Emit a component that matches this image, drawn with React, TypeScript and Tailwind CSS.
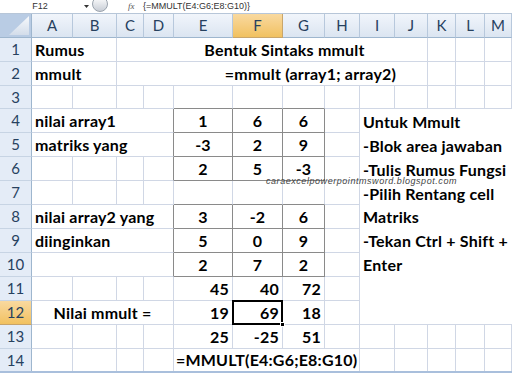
import React from "react";

const font = "font-['Lato','Noto_Sans',sans-serif]";
const cell = "border-r border-b border-[#d0d7e5] flex items-end pb-[2px] whitespace-nowrap font-bold text-[16px] leading-[18px] tracking-[0.2px] text-black";
const mx = "border-r-[#8a8a8a] border-b-[#8a8a8a] justify-center";
const rh = "bg-[#e4ecf7] border-r border-b border-r-[#9eb6ce] border-b-[#c7d4e4] flex items-center justify-center text-[15px] text-[#27415f] font-normal";
const rhSel = "bg-gradient-to-b from-[#f9d99f] to-[#f1c15f] border-r border-b border-r-[#9eb6ce] border-b-[#c7a36a] flex items-center justify-center text-[15px] text-[#27415f] font-normal";
const ch = "bg-gradient-to-b from-[#f1f5fb] to-[#dbe5f1] border-r border-b border-r-[#b7c8dc] border-b-[#9eb6ce] flex items-center justify-center text-[15px] text-[#27415f]";
const chSel = "bg-gradient-to-b from-[#f9d99f] to-[#f1c15f] border-r border-b border-r-[#c9a66b] border-b-[#c9a66b] flex items-center justify-center text-[15px] text-[#27415f]";

export default function App() {
  const cols = ["A", "B", "C", "D", "E", "F", "G", "H", "I", "J", "K", "L", "M"];
  return (
    <div className={`relative w-[512px] h-[373px] overflow-hidden bg-white ${font}`}>
      {/* formula bar */}
      <div className="h-[14px] flex items-start bg-white border-b border-[#b7c6d8] overflow-hidden">
        <div className="w-[80px] h-[13px] flex items-center justify-center text-[9px] leading-[9px] text-[#333] font-['Liberation_Sans',sans-serif]">F12</div>
        <div className="w-[12px] h-[13px] flex items-center justify-center">
          <svg width="5" height="3" viewBox="0 0 5 3"><path d="M0 0H5L2.5 3Z" fill="#333" /></svg>
        </div>
        <div className="w-[16px] h-[16px] -mt-[4px] rounded-full border border-[#9aa3ad] bg-gradient-to-b from-[#ffffff] to-[#c9ced6]" />
        <div className="w-[20px]" />
        <div className="w-[12px] h-[13px] flex items-center text-[9px] leading-[9px] italic text-[#555] font-['Liberation_Serif',serif]">fx</div>
        <div className="h-[13px] flex items-center pl-[3px] text-[9px] leading-[9px] text-[#333] font-['Liberation_Sans',sans-serif]">{"{=MMULT(E4:G6;E8:G10)}"}</div>
      </div>

      <div className="grid grid-cols-[32px_41px_44px_27px_30px_59px_50px_42px_35px_35px_33px_28px_29px_27px] grid-rows-[24px_24px_24px_23px_24px_24px_24px_24px_24px_24px_24px_24px_24px_24px_22px]">
        {/* header row */}
        <div className="relative bg-[#b9cce4] border-r border-b border-r-[#9eb6ce] border-b-[#9eb6ce]">
          <svg className="absolute right-[2px] bottom-[2px]" width="20" height="19" viewBox="0 0 20 19">
            <defs>
              <linearGradient id="tg" x1="0" y1="0" x2="0" y2="1">
                <stop offset="0" stopColor="#f7f9fc" />
                <stop offset="1" stopColor="#d3ddea" />
              </linearGradient>
            </defs>
            <path d="M20 0V19H0Z" fill="url(#tg)" />
          </svg>
        </div>
        {cols.map((c) => (
          <div key={c} className={c === "F" ? chSel : ch}>{c}</div>
        ))}

        {/* row 1 */}
        <div className={rh}>1</div>
        <div className={`${cell} col-span-2 pl-[3px]`}>Rumus</div>
        <div className={`${cell} col-span-8 justify-center pl-[25px]`}>Bentuk Sintaks mmult</div>
        <div className={cell} /><div className={cell} /><div className={cell} />

        {/* row 2 */}
        <div className={rh}>2</div>
        <div className={`${cell} col-span-2 pl-[3px]`}>mmult</div>
        <div className={`${cell} col-span-8 justify-center pl-[77px]`}>=mmult (array1; array2)</div>
        <div className={cell} /><div className={cell} /><div className={cell} />

        {/* row 3 */}
        <div className={rh}>3</div>
        <div className={cell} /><div className={cell} /><div className={cell} /><div className={cell} />
        <div className={`${cell} border-b-[#8a8a8a]`} /><div className={`${cell} border-b-[#8a8a8a]`} /><div className={`${cell} border-b-[#8a8a8a]`} />
        <div className={cell} /><div className={cell} /><div className={cell} /><div className={cell} /><div className={cell} /><div className={cell} />

        {/* row 4 */}
        <div className={rh}>4</div>
        <div className={`${cell} col-span-4 pl-[3px] border-r-[#8a8a8a]`}>nilai array1</div>
        <div className={`${cell} ${mx}`}>1</div>
        <div className={`${cell} ${mx}`}>6</div>
        <div className={`${cell} ${mx}`}>6</div>
        <div className={cell} />
        <div className="col-span-5 row-span-9 border-b border-[#d0d7e5] flex flex-col font-bold text-[16px] leading-[18px] tracking-[0.2px] text-black whitespace-nowrap">
          {["Untuk Mmult", "-Blok area jawaban", "-Tulis Rumus Fungsi", "-Pilih Rentang cell", "Matriks", "-Tekan Ctrl + Shift +", "Enter", "", ""].map((t, i) => (
            <div key={i} className="h-[24px] flex items-end pb-[2px] pl-[3px]">{t}</div>
          ))}
        </div>

        {/* row 5 */}
        <div className={rh}>5</div>
        <div className={`${cell} col-span-4 pl-[3px] border-r-[#8a8a8a]`}>matriks yang</div>
        <div className={`${cell} ${mx}`}>-3</div>
        <div className={`${cell} ${mx}`}>2</div>
        <div className={`${cell} ${mx}`}>9</div>
        <div className={cell} />

        {/* row 6 */}
        <div className={rh}>6</div>
        <div className={cell} /><div className={cell} /><div className={cell} /><div className={`${cell} border-r-[#8a8a8a]`} />
        <div className={`${cell} ${mx}`}>2</div>
        <div className={`${cell} ${mx}`}>5</div>
        <div className={`${cell} ${mx}`}>-3</div>
        <div className={cell} />

        {/* row 7 */}
        <div className={rh}>7</div>
        <div className={cell} /><div className={cell} /><div className={cell} /><div className={cell} />
        <div className={`${cell} border-b-[#8a8a8a]`} /><div className={`${cell} border-b-[#8a8a8a]`} /><div className={`${cell} border-b-[#8a8a8a]`} />
        <div className={cell} />

        {/* row 8 */}
        <div className={rh}>8</div>
        <div className={`${cell} col-span-4 pl-[3px] border-r-[#8a8a8a]`}>nilai array2 yang</div>
        <div className={`${cell} ${mx}`}>3</div>
        <div className={`${cell} ${mx}`}>-2</div>
        <div className={`${cell} ${mx}`}>6</div>
        <div className={cell} />

        {/* row 9 */}
        <div className={rh}>9</div>
        <div className={`${cell} col-span-4 pl-[3px] border-r-[#8a8a8a]`}>diinginkan</div>
        <div className={`${cell} ${mx}`}>5</div>
        <div className={`${cell} ${mx}`}>0</div>
        <div className={`${cell} ${mx}`}>9</div>
        <div className={cell} />

        {/* row 10 */}
        <div className={rh}>10</div>
        <div className={`${cell} col-span-4 border-r-[#8a8a8a]`} />
        <div className={`${cell} ${mx}`}>2</div>
        <div className={`${cell} ${mx}`}>7</div>
        <div className={`${cell} ${mx}`}>2</div>
        <div className={cell} />

        {/* row 11 */}
        <div className={rh}>11</div>
        <div className={cell} /><div className={cell} /><div className={cell} /><div className={cell} />
        <div className={`${cell} justify-end pr-[3px]`}>45</div>
        <div className={`${cell} justify-end pr-[3px]`}>40</div>
        <div className={`${cell} justify-end pr-[3px]`}>72</div>
        <div className={cell} />

        {/* row 12 */}
        <div className={rhSel}>12</div>
        <div className={`${cell} col-span-4 justify-center`}>Nilai mmult =</div>
        <div className={`${cell} justify-end pr-[3px]`}>19</div>
        <div className={`${cell} justify-end pr-[3px] relative`}>
          69
          <div className="absolute -left-[1px] -top-[1px] w-[51px] h-[25px] border-2 border-black" />
          <div className="absolute -right-[3px] -bottom-[3px] w-[5px] h-[5px] bg-black border border-white" />
        </div>
        <div className={`${cell} justify-end pr-[3px]`}>18</div>
        <div className={cell} />

        {/* row 13 */}
        <div className={rh}>13</div>
        <div className={cell} /><div className={cell} /><div className={cell} /><div className={cell} />
        <div className={`${cell} justify-end pr-[3px]`}>25</div>
        <div className={`${cell} justify-end pr-[3px]`}>-25</div>
        <div className={`${cell} justify-end pr-[3px]`}>51</div>
        <div className={cell} /><div className={cell} /><div className={cell} /><div className={cell} /><div className={cell} /><div className={cell} />

        {/* row 14 */}
        <div className={`${rh} border-b-0`}>14</div>
        <div className={`${cell} border-b-0`} /><div className={`${cell} border-b-0`} /><div className={`${cell} border-b-0`} /><div className={`${cell} border-b-0`} />
        <div className={`${cell} col-span-4 pl-[2px] border-b-0`}>=MMULT(E4:G6;E8:G10)</div>
        <div className={`${cell} border-b-0`} /><div className={`${cell} border-b-0`} /><div className={`${cell} border-b-0`} /><div className={`${cell} border-b-0`} /><div className={`${cell} border-b-0`} />
      </div>
      <div className="h-[2px] bg-[#a9bfdc]" />

      {/* watermark */}
      <div className="absolute left-[266px] top-[176px] text-[9px] leading-[10px] italic tracking-[0.55px] text-[#444] font-['Liberation_Sans',sans-serif]">
        caraexcelpowerpointmsword.blogspot.com
      </div>
    </div>
  );
}
